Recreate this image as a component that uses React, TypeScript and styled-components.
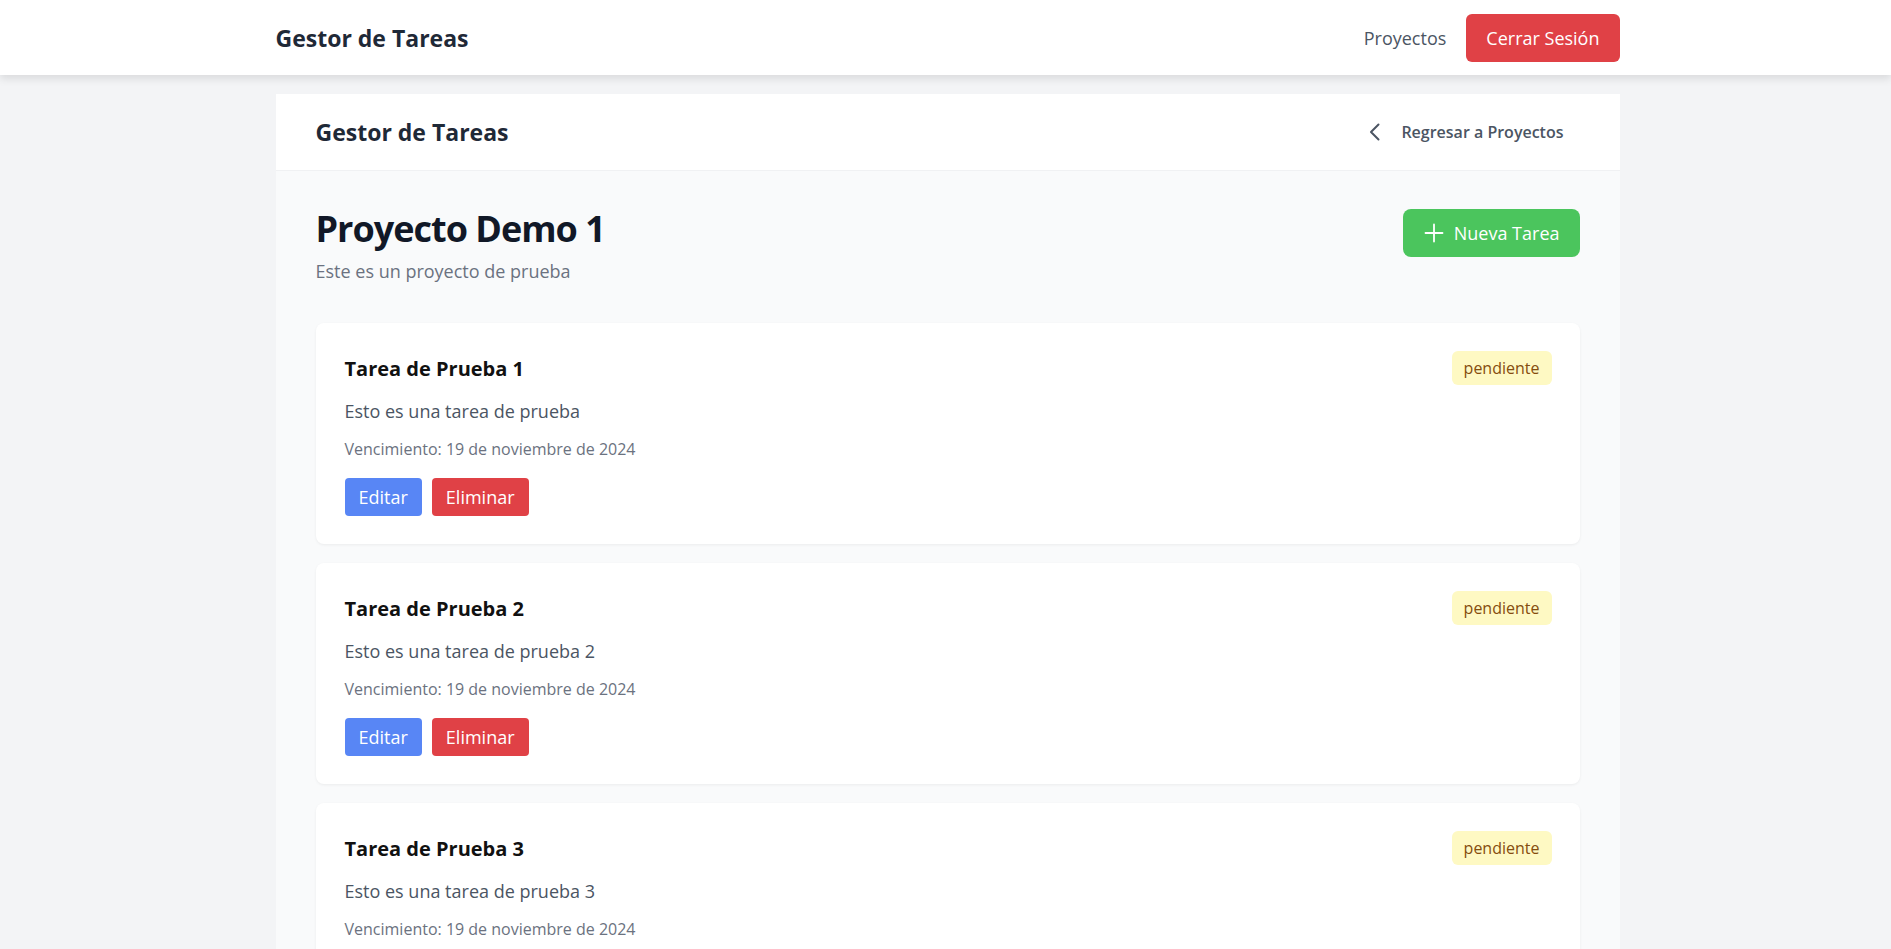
import styled, { createGlobalStyle } from "styled-components";

const tasks = [
  { id: 1, title: "Tarea de Prueba 1", description: "Esto es una tarea de prueba", due: "19 de noviembre de 2024", status: "pendiente" },
  { id: 2, title: "Tarea de Prueba 2", description: "Esto es una tarea de prueba 2", due: "19 de noviembre de 2024", status: "pendiente" },
  { id: 3, title: "Tarea de Prueba 3", description: "Esto es una tarea de prueba 3", due: "19 de noviembre de 2024", status: "pendiente" },
];

const GlobalStyle = createGlobalStyle`
  * { box-sizing: border-box; }
  body {
    margin: 0;
    padding-left: 4px;
    background: #f3f4f6;
    font-family: "Open Sans", "Noto Sans", sans-serif;
  }
`;

const ChevronLeft = () => (
  <svg width="24" height="24" viewBox="0 0 24 24" fill="none" stroke="currentColor" strokeWidth="2" strokeLinecap="round" strokeLinejoin="round">
    <path d="M15.5 19.5 8 12l7.5-7.5" />
  </svg>
);

const PlusIcon = () => (
  <svg width="20" height="20" viewBox="0 0 20 20" fill="none" stroke="currentColor" strokeWidth="1.8" strokeLinecap="round">
    <path d="M10 1.5v17M1.5 10h17" />
  </svg>
);

const TaskCard = ({ task }) => {
  return (
    <Card>
      <CardHead>
        <CardTitle>{task.title}</CardTitle>
        <Badge>{task.status}</Badge>
      </CardHead>
      <Description>{task.description}</Description>
      <Due>Vencimiento: {task.due}</Due>
      <Actions>
        <ActionButton $color="#5886f5">Editar</ActionButton>
        <ActionButton $color="#e04146">Eliminar</ActionButton>
      </Actions>
    </Card>
  );
};

export default function App() {
  return (
    <>
      <GlobalStyle />
      <Nav>
        <NavInner>
          <Brand>Gestor de Tareas</Brand>
          <NavRight>
            <NavLink href="#">Proyectos</NavLink>
            <LogoutButton>Cerrar Sesión</LogoutButton>
          </NavRight>
        </NavInner>
      </Nav>
      <Main>
        <Panel>
          <PanelHeader>
            <Brand as="h1">Gestor de Tareas</Brand>
            <BackButton>
              <ChevronLeft />
              Regresar a Proyectos
            </BackButton>
          </PanelHeader>
          <PanelBody>
            <ProjectRow>
              <div>
                <ProjectTitle>Proyecto Demo 1</ProjectTitle>
                <ProjectDesc>Este es un proyecto de prueba</ProjectDesc>
              </div>
              <NewTaskButton>
                <PlusIcon />
                Nueva Tarea
              </NewTaskButton>
            </ProjectRow>
            <TaskList>
              {tasks.map((t) => (
                <TaskCard key={t.id} task={t} />
              ))}
            </TaskList>
          </PanelBody>
        </Panel>
      </Main>
    </>
  );
}

const Nav = styled.nav`
  background: #fff;
  height: 75px;
  margin-left: -4px;
  padding-left: 4px;
  box-shadow: 0 4px 8px rgba(0, 0, 0, 0.1);
  position: relative;
  z-index: 1;
`;

const NavInner = styled.div`
  max-width: 1344px;
  height: 100%;
  margin: 0 auto;
  display: flex;
  align-items: center;
  justify-content: space-between;
`;

const Brand = styled.div`
  margin: 0;
  font-size: 23px;
  font-weight: 700;
  color: #1f2937;
`;

const NavRight = styled.div`
  display: flex;
  align-items: center;
  gap: 20px;
`;

const NavLink = styled.a`
  font-size: 18px;
  color: #4b5563;
  text-decoration: none;
`;

const LogoutButton = styled.button`
  height: 48px;
  padding: 0 20px;
  border: none;
  border-radius: 6px;
  background: #e04146;
  color: #fff;
  font-family: inherit;
  font-size: 18px;
  cursor: pointer;
`;

const Main = styled.main`
  padding-top: 19px;
`;

const Panel = styled.div`
  max-width: 1344px;
  margin: 0 auto;
  background: #f9fafb;
`;

const PanelHeader = styled.div`
  height: 77px;
  padding: 0 40px;
  background: #fff;
  border-bottom: 1px solid #f0f1f3;
  display: flex;
  align-items: center;
  justify-content: space-between;
  color: #111827;
`;

const BackButton = styled.button`
  display: flex;
  align-items: center;
  gap: 14px;
  padding: 8px 16px;
  border: none;
  background: transparent;
  color: #4b5563;
  font-family: inherit;
  font-size: 16px;
  font-weight: 600;
  cursor: pointer;
`;

const PanelBody = styled.div`
  padding: 38px 40px;
`;

const ProjectRow = styled.div`
  display: flex;
  justify-content: space-between;
  align-items: flex-start;
  margin-bottom: 38px;
`;

const ProjectTitle = styled.h2`
  margin: 0;
  font-size: 36px;
  line-height: 40px;
  font-weight: 700;
  letter-spacing: -1px;
  color: #111827;
`;

const ProjectDesc = styled.p`
  margin: 8px 0 0;
  font-size: 18px;
  line-height: 28px;
  color: #6b7280;
`;

const NewTaskButton = styled.button`
  display: flex;
  align-items: center;
  gap: 10px;
  height: 48px;
  padding: 0 20px 0 21px;
  border: none;
  border-radius: 8px;
  background: #4bc55d;
  color: #fff;
  font-family: inherit;
  font-size: 18px;
  cursor: pointer;
`;

const TaskList = styled.div`
  display: flex;
  flex-direction: column;
  gap: 19px;
`;

const Card = styled.div`
  background: #fff;
  border-radius: 8px;
  padding: 28px 28px 28px 29px;
  box-shadow: 0 1px 3px rgba(0, 0, 0, 0.06);
`;

const CardHead = styled.div`
  display: flex;
  align-items: center;
  justify-content: space-between;
  height: 34px;
`;

const CardTitle = styled.h3`
  margin: 0;
  font-size: 20px;
  font-weight: 700;
  color: #111;
`;

const Badge = styled.span`
  display: inline-flex;
  align-items: center;
  height: 34px;
  padding: 0 12px;
  border-radius: 6px;
  background: #fef9c3;
  color: #854d0e;
  font-size: 16px;
`;

const Description = styled.p`
  margin: 12px 0 0;
  font-size: 18px;
  line-height: 28px;
  color: #4b5563;
`;

const Due = styled.p`
  margin: 12px 0 0;
  font-size: 16px;
  line-height: 24px;
  color: #6b7280;
`;

const Actions = styled.div`
  display: flex;
  gap: 10px;
  margin-top: 17px;
`;

const ActionButton = styled.button`
  height: 38px;
  padding: 0 14px;
  border: none;
  border-radius: 4px;
  background: ${(p) => p.$color};
  color: #fff;
  font-family: inherit;
  font-size: 18px;
  cursor: pointer;
`;
